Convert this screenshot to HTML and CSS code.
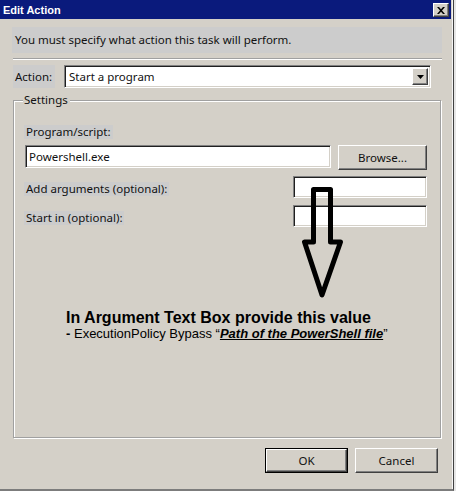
FILE: index.html
```html
<!DOCTYPE html>
<html>
<head>
<meta charset="utf-8">
<title>Edit Action</title>
<link rel="stylesheet" href="styles.css">
</head>
<body>
<div class="window">
  <div class="titlebar">
    <span class="title">Edit Action</span>
    <span class="close"><svg width="8" height="7" viewBox="0 0 8 7"><path d="M0 0h2l2 2.3 2-2.3h2l-3 3.5 3 3.5h-2l-2-2.3-2 2.3h-2l3-3.5z" fill="#000"/></svg></span>
  </div>
  <div class="content">
    <div class="info">You must specify what action this task will perform.</div>
    <div class="sep"></div>
    <div class="action-row">
      <span class="action-label">Action:</span>
      <div class="select">
        <span class="select-text">Start a program</span>
        <span class="drop"><svg width="7" height="4" viewBox="0 0 7 4"><path d="M0 0h7l-3.5 4z" fill="#000"/></svg></span>
      </div>
    </div>
    <fieldset class="settings">
      <legend>Settings</legend>
      <div class="label-line"><span class="label">Program/script:</span></div>
      <div class="prog-row">
        <div class="field prog-field">Powershell.exe</div>
        <div class="btn browse">Browse...</div>
      </div>
      <div class="opt-row first">
        <span class="label">Add arguments (optional):</span>
        <div class="field opt-field"></div>
      </div>
      <div class="opt-row">
        <span class="label">Start in (optional):</span>
        <div class="field opt-field"></div>
      </div>
      <div class="note">
        <div class="note-title">In Argument Text Box provide this value</div>
        <div class="note-value"><b>-</b> ExecutionPolicy Bypass “<b><i><u>Path of the PowerShell file</u></i></b>”</div>
      </div>
    </fieldset>
    <div class="buttons">
      <div class="btn default"><span>OK</span></div>
      <div class="btn">Cancel</div>
    </div>
  </div>
  <svg class="arrow" width="456" height="491" viewBox="0 0 456 491">
    <path d="M313.5 189.5H330.5V242H340.5L322 295L304.5 242H313.5Z" fill="none" stroke="#000" stroke-width="5" stroke-linejoin="round"/>
  </svg>
</div>
</body>
</html>
```

FILE: styles.css
```css
* { box-sizing: border-box; }
html, body { margin: 0; padding: 0; }
body {
  width: 456px;
  height: 491px;
  overflow: hidden;
  background: #e6e6e6;
  font-family: "Noto Sans", "Open Sans", sans-serif;
  font-size: 11.5px;
  color: #111;
}
.window {
  position: relative;
  width: 454px;
  height: 491px;
  background: #d4d0c8;
  border-right: 1px solid #404040;
  border-bottom: 2px solid #7c7c7c;
  box-shadow: inset -1px 0 0 #f4f4f4;
}
.titlebar {
  height: 19px;
  margin-right: 2px;
  background: #0a1a7c;
  display: flex;
  align-items: center;
  justify-content: space-between;
  padding: 0 2px 0 3px;
}
.title {
  font-family: "Liberation Sans", Arial, sans-serif;
  font-weight: bold;
  font-size: 11px;
  color: #fff;
}
.close {
  width: 16px;
  height: 14px;
  margin-top: 1px;
  background: #d4d0c8;
  border-top: 1px solid #fff;
  border-left: 1px solid #fff;
  border-right: 1px solid #404040;
  border-bottom: 1px solid #404040;
  box-shadow: inset -1px -1px 0 #808080;
  display: flex;
  align-items: center;
  justify-content: center;
}
.content {
  padding: 0 11px 0 12px;
}
.info {
  margin-top: 8px;
  height: 26px;
  line-height: 26px;
  padding-left: 3px;
  background: #cccccc;
}
.sep {
  margin: 5px 0 0 1px;
  height: 2px;
  border-top: 1px solid #a0a0a0;
  border-bottom: 1px solid #fff;
}
.action-row {
  margin-top: 5px;
  height: 23px;
  display: flex;
}
.action-label {
  margin-left: 1px;
  width: 42px;
  padding-left: 2px;
  line-height: 23px;
  background: #cccccc;
}
.select {
  margin-left: 9px;
  width: 367px;
  height: 23px;
  background: #fff;
  border-top: 1px solid #808080;
  border-left: 1px solid #808080;
  border-right: 1px solid #fff;
  border-bottom: 1px solid #fff;
  box-shadow: inset 1px 1px 0 #202020, inset -1px -1px 0 #d4d0c8;
  display: flex;
  align-items: center;
  justify-content: space-between;
  padding: 2px 2px 2px 4px;
}
.drop {
  width: 16px;
  height: 17px;
  background: #d4d0c8;
  border-top: 1px solid #fff;
  border-left: 1px solid #fff;
  border-right: 1px solid #404040;
  border-bottom: 1px solid #404040;
  box-shadow: inset -1px -1px 0 #808080;
  display: flex;
  align-items: center;
  justify-content: center;
}
.settings {
  margin: 4px 0 0 1px;
  width: 428px;
  height: 346px;
  padding: 0 13px 0 10px;
  border: 1px solid #a0a0a0;
  box-shadow: 1px 1px 0 #fff, inset 1px 1px 0 #fff;
  min-width: 0;
}
.settings legend {
  margin-left: -1px;
  padding: 0 2px 0 1px;
  line-height: 16px;
  background: #d4d0c8;
}
.label {
  display: inline-block;
  height: 14px;
  line-height: 14px;
  padding: 0 2px;
  background: #cccccc;
}
.label-line {
  margin-top: 17px;
  display: flex;
}
.prog-row {
  margin-top: 6px;
  display: flex;
  align-items: flex-start;
}
.field {
  height: 23px;
  background: #fff;
  border-top: 1px solid #808080;
  border-left: 1px solid #808080;
  border-right: 1px solid #fff;
  border-bottom: 1px solid #fff;
  box-shadow: inset 1px 1px 0 #202020, inset -1px -1px 0 #d4d0c8;
  padding: 0 3px;
  line-height: 21px;
}
.prog-field {
  margin-left: 1px;
  width: 306px;
}
.btn {
  height: 25px;
  background: #d4d0c8;
  border-top: 1px solid #fff;
  border-left: 1px solid #fff;
  border-right: 1px solid #404040;
  border-bottom: 1px solid #404040;
  box-shadow: inset -1px -1px 0 #808080;
  display: flex;
  align-items: center;
  justify-content: center;
  width: 83px;
}
.browse {
  margin-left: 7px;
  width: 89px;
}
.opt-row {
  margin-top: 7px;
  display: flex;
  justify-content: space-between;
  align-items: flex-start;
}
.opt-row.first {
  margin-top: 6px;
}
.opt-row .label {
  margin-top: 6px;
}
.opt-field {
  width: 134px;
  height: 22px;
}
.note {
  margin: 82px 0 0 42px;
  font-family: "Liberation Sans", Arial, sans-serif;
  color: #000;
}
.note-title {
  font-size: 16px;
  font-weight: bold;
  line-height: 17px;
}
.note-value {
  font-size: 13px;
  line-height: 15px;
}
.buttons {
  margin: 10px 4px 0 0;
  display: flex;
  justify-content: flex-end;
  gap: 7px;
}
.btn.default {
  border: 1px solid #000;
  box-shadow: none;
  padding: 0;
}
.btn.default span {
  flex: 1;
  align-self: stretch;
  display: flex;
  align-items: center;
  justify-content: center;
  border-top: 1px solid #fff;
  border-left: 1px solid #fff;
  border-right: 1px solid #404040;
  border-bottom: 1px solid #404040;
  box-shadow: inset -1px -1px 0 #808080;
}
.arrow {
  position: absolute;
  left: 0;
  top: 0;
  pointer-events: none;
}
```
